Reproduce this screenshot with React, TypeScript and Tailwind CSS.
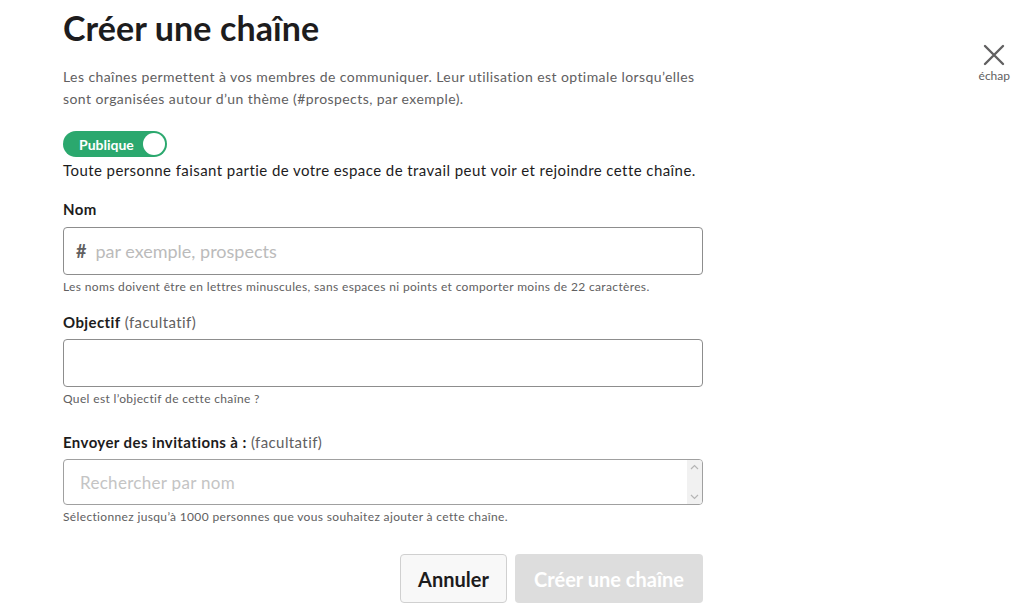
const Label = ({ main, extra }: { main: string; extra?: string }) => (
  <div className="text-[15px] leading-[22px] font-bold text-[#1d1c1d] tracking-[0.4px]">
    {main}
    {extra && <span className="font-normal text-[#616061]"> {extra}</span>}
  </div>
);

const Hint = ({ children }: { children: string }) => (
  <div className="text-[12px] leading-[18px] text-[#616061] mt-[3px] tracking-[0.35px]">{children}</div>
);

export default function App() {
  return (
    <div
      className="relative w-[1021px] h-[615px] bg-white overflow-hidden"
      style={{ fontFamily: 'Lato, "Noto Sans", sans-serif' }}
    >
      {/* fermer */}
      <div className="absolute right-[11px] top-[44px] flex flex-col items-center text-[#616061]">
        <svg width="22" height="22" viewBox="0 0 22 22">
          <path d="M2 2 L20 20 M20 2 L2 20" stroke="#616061" strokeWidth="2.4" strokeLinecap="round" />
        </svg>
        <span className="text-[12px] leading-[14px] mt-[3px]">échap</span>
      </div>

      <div className="w-[640px] ml-[63px] pt-[7px]">
        <h1 className="text-[34px] leading-[41px] font-bold text-[#1d1c1d] tracking-[0.1px]">
          Créer une chaîne
        </h1>
        <p className="mt-[18px] text-[14px] leading-[22px] text-[#616061] w-[650px] tracking-[0.42px]">
          Les chaînes permettent à vos membres de communiquer. Leur utilisation est optimale lorsqu’elles
          <br />
          sont organisées autour d’un thème (#prospects, par exemple).
        </p>

        {/* toggle */}
        <div className="mt-[21px] w-[104px] h-[26px] rounded-full bg-[#2ba86e] flex items-center justify-between pl-[16px] pr-[2px]">
          <span className="text-[14px] font-bold text-white">Publique</span>
          <span className="w-[22px] h-[22px] rounded-full bg-white" />
        </div>
        <div className="text-[15px] leading-[22px] text-[#1d1c1d] mt-[2px] tracking-[0.43px]">
          Toute personne faisant partie de votre espace de travail peut voir et rejoindre cette chaîne.
        </div>

        <div className="mt-[17px]">
          <Label main="Nom" />
          <div className="mt-[7px] h-[48px] border border-[#8d8d8d] rounded-[4px] flex items-center px-[12px] text-[18px]">
            <span className="font-bold text-[#616061] mr-[9px]">#</span>
            <span className="text-[#bbbbbb]">par exemple, prospects</span>
          </div>
          <Hint>Les noms doivent être en lettres minuscules, sans espaces ni points et comporter moins de 22 caractères.</Hint>
        </div>

        <div className="mt-[15px]">
          <Label main="Objectif" extra="(facultatif)" />
          <div className="mt-[6px] h-[48px] border border-[#8d8d8d] rounded-[4px]" />
          <Hint>Quel est l’objectif de cette chaîne ?</Hint>
        </div>

        <div className="mt-[23px]">
          <Label main="Envoyer des invitations à :" extra="(facultatif)" />
          <div className="mt-[6px] h-[46px] border border-[#a0a0a0] rounded-[4px] flex overflow-hidden">
            <div className="flex-1 h-[31px] overflow-hidden pt-[13px] pl-[16px]">
              <div className="text-[17px] leading-[20px] text-[#c4c4c4] tracking-[0.3px]">Rechercher par nom</div>
            </div>
            <div className="w-[15px] bg-[#f1f1f1] flex flex-col items-center justify-between py-[4px] text-[#b5b5b5]">
              <svg width="9" height="6" viewBox="0 0 9 6"><path d="M1 5 L4.5 1.5 L8 5" fill="none" stroke="currentColor" strokeWidth="1.2" /></svg>
              <svg width="9" height="6" viewBox="0 0 9 6"><path d="M1 1 L4.5 4.5 L8 1" fill="none" stroke="currentColor" strokeWidth="1.2" /></svg>
            </div>
          </div>
          <Hint>Sélectionnez jusqu’à 1000 personnes que vous souhaitez ajouter à cette chaîne.</Hint>
        </div>

        <div className="mt-[28px] flex justify-end gap-[8px]">
          <button className="h-[49px] w-[107px] rounded-[4px] border border-[#d0d0d0] bg-[#f8f8f8] text-[20px] font-bold text-[#1d1c1d]">
            Annuler
          </button>
          <button className="h-[49px] w-[188px] rounded-[4px] bg-[#dddddd] text-[20px] font-bold text-white">
            Créer une chaîne
          </button>
        </div>
      </div>
    </div>
  );
}
